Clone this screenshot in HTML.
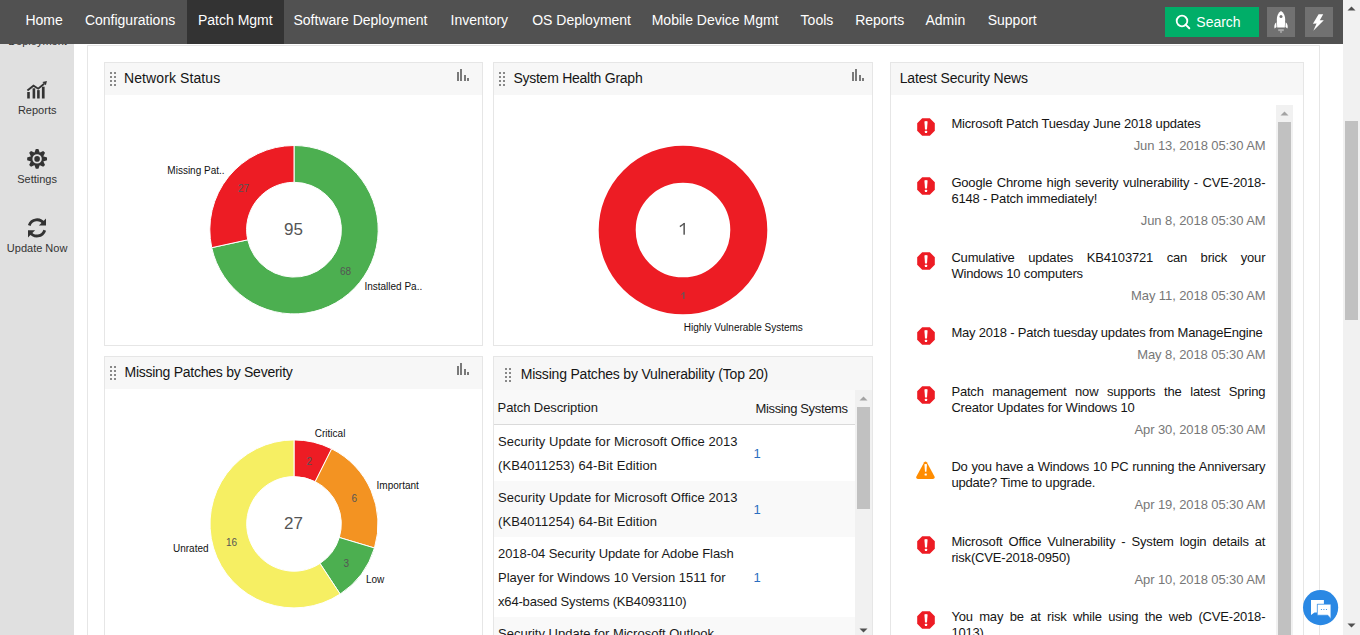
<!DOCTYPE html>
<html><head><meta charset="utf-8"><style>
html,body{margin:0;padding:0;}
body{width:1360px;height:635px;overflow:hidden;position:relative;background:#fff;font-family:"Liberation Sans",sans-serif;}
.t{position:absolute;white-space:nowrap;line-height:1;}
#hd{position:absolute;left:0;top:0;width:1360px;height:44px;z-index:5;}
</style></head><body>
<div id="main">
<div id="hd">
<div style="position:absolute;left:0px;top:0px;width:1343px;height:44px;background:#515151"></div>
<div style="position:absolute;left:187px;top:0px;width:97px;height:44px;background:#333"></div>
<div style="position:absolute;left:1165px;top:7px;width:94px;height:30px;background:#00ae68"></div>
<div style="position:absolute;left:1267px;top:7px;width:28px;height:30px;background:#717171"></div>
<div style="position:absolute;left:1305px;top:7px;width:28px;height:30px;background:#717171"></div>
<svg style="position:absolute;left:1170px;top:10px" width="26" height="24"><circle cx="12" cy="11" r="5.3" fill="none" stroke="#fff" stroke-width="1.8"/><line x1="15.6" y1="14.6" x2="19.3" y2="18.3" stroke="#fff" stroke-width="2" stroke-linecap="round"/></svg>
<svg style="position:absolute;left:1267px;top:7px" width="28" height="30" viewBox="1267 7 28 30"><path d="M1281 11 C1283.9 12.8 1285.3 16 1285.2 20 L1284.8 27.4 L1277.2 27.4 L1276.8 20 C1276.7 16 1278.1 12.8 1281 11Z" fill="#fff"/><circle cx="1281" cy="16.6" r="1.5" fill="#717171"/><path d="M1276.3 22.2 L1276.6 27 L1274.6 28.6 C1273.9 26.3 1274.4 23.8 1276.3 22.2Z" fill="#fff"/><path d="M1285.7 22.2 L1285.4 27 L1287.4 28.6 C1288.1 26.3 1287.6 23.8 1285.7 22.2Z" fill="#fff"/><rect x="1278.2" y="29.1" width="5.6" height="2" fill="#a9a9a9"/><rect x="1280.2" y="31" width="1.6" height="1.9" fill="#a9a9a9"/></svg>
<svg style="position:absolute;left:1305px;top:7px" width="28" height="30" viewBox="1305 7 28 30"><path d="M1318.6 14.3 L1323.2 14.2 L1319.8 20.3 L1323.8 20.2 L1313.3 30.8 L1316.6 23.6 L1312.9 23.8 Z" fill="#fff"/></svg>
<div class="t" style="left:25.40px;top:13px;font-size:14px;color:#fff;">Home</div>
<div class="t" style="left:84.90px;top:13px;font-size:14px;color:#fff;">Configurations</div>
<div class="t" style="left:197.95px;top:13px;font-size:14px;color:#fff;">Patch Mgmt</div>
<div class="t" style="left:293.50px;top:13px;font-size:14px;color:#fff;">Software Deployment</div>
<div class="t" style="left:450.50px;top:13px;font-size:14px;color:#fff;">Inventory</div>
<div class="t" style="left:532.20px;top:13px;font-size:14px;color:#fff;">OS Deployment</div>
<div class="t" style="left:651.70px;top:13px;font-size:14px;color:#fff;">Mobile Device Mgmt</div>
<div class="t" style="left:800.60px;top:13px;font-size:14px;color:#fff;">Tools</div>
<div class="t" style="left:855.20px;top:13px;font-size:14px;color:#fff;">Reports</div>
<div class="t" style="left:925.50px;top:13px;font-size:14px;color:#fff;">Admin</div>
<div class="t" style="left:987.70px;top:13px;font-size:14px;color:#fff;">Support</div>
<div class="t" style="left:1196.30px;top:15px;font-size:14px;color:#fff;">Search</div></div>
<div style="position:absolute;left:0px;top:44px;width:74px;height:591px;background:#e0e0e0"></div>
<svg style="position:absolute;left:24px;top:78px" width="26" height="24" viewBox="24 78 26 24"><rect x="27.2" y="92" width="2.6" height="6.5" fill="#333"/><rect x="32.6" y="88.3" width="2.6" height="10.2" fill="#333"/><rect x="37.1" y="90.1" width="2.6" height="8.4" fill="#333"/><rect x="41.9" y="86.7" width="2.7" height="11.8" fill="#333"/><polyline points="27.4,90.5 33.5,85.7 38.2,88.7 44.2,83.8" fill="none" stroke="#333" stroke-width="1.9"/><path d="M46.9 81 L42.4 81.9 L45.9 85.3 Z" fill="#333"/></svg>
<svg style="position:absolute;left:22px;top:144px" width="30" height="30" viewBox="22 144 30 30"><polygon points="34.41,152.87 35.80,148.98 38.40,148.98 39.79,152.87 39.46,152.74 43.19,150.97 45.03,152.81 43.26,156.54 43.13,156.21 47.02,157.60 47.02,160.20 43.13,161.59 43.26,161.26 45.03,164.99 43.19,166.83 39.46,165.06 39.79,164.93 38.40,168.82 35.80,168.82 34.41,164.93 34.74,165.06 31.01,166.83 29.17,164.99 30.94,161.26 31.07,161.59 27.18,160.20 27.18,157.60 31.07,156.21 30.94,156.54 29.17,152.81 31.01,150.97 34.74,152.74" fill="#333"/><circle cx="37.1" cy="158.9" r="3.75" fill="none" stroke="#e0e0e0" stroke-width="1.9"/></svg>
<svg style="position:absolute;left:22px;top:213px" width="30" height="30" viewBox="22 213 30 30"><path d="M29.25 225.53 A8.1 8.1 0 0 1 43.87 223.61" fill="none" stroke="#333" stroke-width="2.8"/><path d="M46 218.4 V225.6 H38.9Z" fill="#333"/><path d="M44.75 230.27 A8.1 8.1 0 0 1 30.13 232.19" fill="none" stroke="#333" stroke-width="2.8"/><path d="M28 237.6 V230.3 H35.1Z" fill="#333"/></svg>
<div style="position:absolute;left:87px;top:45px;width:1233px;height:700px;border:1px solid #e6e6e6;box-sizing:border-box;background:#fff"></div>
<div style="position:absolute;left:104px;top:62px;width:379px;height:284px;border:1px solid #e6e6e6;box-sizing:border-box;background:#fff"></div>
<div style="position:absolute;left:105px;top:63px;width:377px;height:32px;background:#f7f7f7"></div>
<div style="position:absolute;left:110px;top:72px;width:2px;height:2px;background:#888"></div>
<div style="position:absolute;left:110px;top:76px;width:2px;height:2px;background:#888"></div>
<div style="position:absolute;left:110px;top:80px;width:2px;height:2px;background:#888"></div>
<div style="position:absolute;left:110px;top:84px;width:2px;height:2px;background:#888"></div>
<div style="position:absolute;left:114px;top:72px;width:2px;height:2px;background:#888"></div>
<div style="position:absolute;left:114px;top:76px;width:2px;height:2px;background:#888"></div>
<div style="position:absolute;left:114px;top:80px;width:2px;height:2px;background:#888"></div>
<div style="position:absolute;left:114px;top:84px;width:2px;height:2px;background:#888"></div>
<div style="position:absolute;left:457px;top:72px;width:2px;height:9px;background:#7a7a7a"></div>
<div style="position:absolute;left:460.3px;top:69px;width:2px;height:12px;background:#7a7a7a"></div>
<div style="position:absolute;left:463.8px;top:75px;width:2px;height:6px;background:#7a7a7a"></div>
<div style="position:absolute;left:467px;top:78px;width:2px;height:3px;background:#7a7a7a"></div>
<div style="position:absolute;left:493px;top:62px;width:380px;height:284px;border:1px solid #e6e6e6;box-sizing:border-box;background:#fff"></div>
<div style="position:absolute;left:494px;top:63px;width:378px;height:32px;background:#f7f7f7"></div>
<div style="position:absolute;left:499px;top:72px;width:2px;height:2px;background:#888"></div>
<div style="position:absolute;left:499px;top:76px;width:2px;height:2px;background:#888"></div>
<div style="position:absolute;left:499px;top:80px;width:2px;height:2px;background:#888"></div>
<div style="position:absolute;left:499px;top:84px;width:2px;height:2px;background:#888"></div>
<div style="position:absolute;left:503px;top:72px;width:2px;height:2px;background:#888"></div>
<div style="position:absolute;left:503px;top:76px;width:2px;height:2px;background:#888"></div>
<div style="position:absolute;left:503px;top:80px;width:2px;height:2px;background:#888"></div>
<div style="position:absolute;left:503px;top:84px;width:2px;height:2px;background:#888"></div>
<div style="position:absolute;left:852px;top:72px;width:2px;height:9px;background:#7a7a7a"></div>
<div style="position:absolute;left:855.3px;top:69px;width:2px;height:12px;background:#7a7a7a"></div>
<div style="position:absolute;left:858.8px;top:75px;width:2px;height:6px;background:#7a7a7a"></div>
<div style="position:absolute;left:862px;top:78px;width:2px;height:3px;background:#7a7a7a"></div>
<div style="position:absolute;left:890px;top:62px;width:414px;height:700px;border:1px solid #e6e6e6;box-sizing:border-box;background:#fff"></div>
<div style="position:absolute;left:891px;top:63px;width:412px;height:32px;background:#f7f7f7"></div>
<div style="position:absolute;left:104px;top:356px;width:379px;height:400px;border:1px solid #e6e6e6;box-sizing:border-box;background:#fff"></div>
<div style="position:absolute;left:105px;top:357px;width:377px;height:32px;background:#f7f7f7"></div>
<div style="position:absolute;left:110px;top:366px;width:2px;height:2px;background:#888"></div>
<div style="position:absolute;left:110px;top:370px;width:2px;height:2px;background:#888"></div>
<div style="position:absolute;left:110px;top:374px;width:2px;height:2px;background:#888"></div>
<div style="position:absolute;left:110px;top:378px;width:2px;height:2px;background:#888"></div>
<div style="position:absolute;left:114px;top:366px;width:2px;height:2px;background:#888"></div>
<div style="position:absolute;left:114px;top:370px;width:2px;height:2px;background:#888"></div>
<div style="position:absolute;left:114px;top:374px;width:2px;height:2px;background:#888"></div>
<div style="position:absolute;left:114px;top:378px;width:2px;height:2px;background:#888"></div>
<div style="position:absolute;left:457px;top:366px;width:2px;height:9px;background:#7a7a7a"></div>
<div style="position:absolute;left:460.3px;top:363px;width:2px;height:12px;background:#7a7a7a"></div>
<div style="position:absolute;left:463.8px;top:369px;width:2px;height:6px;background:#7a7a7a"></div>
<div style="position:absolute;left:467px;top:372px;width:2px;height:3px;background:#7a7a7a"></div>
<div style="position:absolute;left:493px;top:356px;width:380px;height:400px;border:1px solid #e6e6e6;box-sizing:border-box;background:#fff"></div>
<div style="position:absolute;left:494px;top:357px;width:378px;height:33px;background:#f7f7f7"></div>
<div style="position:absolute;left:505px;top:368px;width:2px;height:2px;background:#888"></div>
<div style="position:absolute;left:505px;top:372px;width:2px;height:2px;background:#888"></div>
<div style="position:absolute;left:505px;top:376px;width:2px;height:2px;background:#888"></div>
<div style="position:absolute;left:505px;top:380px;width:2px;height:2px;background:#888"></div>
<div style="position:absolute;left:509px;top:368px;width:2px;height:2px;background:#888"></div>
<div style="position:absolute;left:509px;top:372px;width:2px;height:2px;background:#888"></div>
<div style="position:absolute;left:509px;top:376px;width:2px;height:2px;background:#888"></div>
<div style="position:absolute;left:509px;top:380px;width:2px;height:2px;background:#888"></div>
<svg style="position:absolute;left:0;top:0" width="1360" height="635">
<path d="M294.00 145.50 A84.2 84.2 0 1 1 211.74 247.66 L247.69 239.81 A47.4 47.4 0 1 0 294.00 182.30Z" fill="#4caf50" stroke="#fff" stroke-width="1"/>
<path d="M211.74 247.66 A84.2 84.2 0 0 1 294.00 145.50 L294.00 182.30 A47.4 47.4 0 0 0 247.69 239.81Z" fill="#ed1c24" stroke="#fff" stroke-width="1"/>
<circle cx="683" cy="230" r="65.8" fill="none" stroke="#ed1c24" stroke-width="37.0"/>
<path d="M294.00 439.90 A84 84 0 0 1 331.70 448.83 L315.23 481.63 A47.3 47.3 0 0 0 294.00 476.60Z" fill="#ed1c24" stroke="#fff" stroke-width="1"/>
<path d="M331.70 448.83 A84 84 0 0 1 374.47 547.99 L339.31 537.47 A47.3 47.3 0 0 0 315.23 481.63Z" fill="#f39322" stroke="#fff" stroke-width="1"/>
<path d="M374.47 547.99 A84 84 0 0 1 340.16 594.08 L319.99 563.42 A47.3 47.3 0 0 0 339.31 537.47Z" fill="#4caf50" stroke="#fff" stroke-width="1"/>
<path d="M340.16 594.08 A84 84 0 1 1 294.00 439.90 L294.00 476.60 A47.3 47.3 0 1 0 319.99 563.42Z" fill="#f6ef63" stroke="#fff" stroke-width="1"/>
</svg>
<svg style="position:absolute;left:670px;top:215px" width="30" height="90" viewBox="670 215 30 90"><rect x="683.4" y="223" width="1.5" height="11.7" fill="#555"/><path d="M679.9 226.6 L684.6 223.2" stroke="#555" stroke-width="1.3"/><rect x="683.2" y="292.3" width="1.3" height="6.6" fill="#5a5a5a"/><path d="M681.3 294.6 L684.2 292.4" stroke="#5a5a5a" stroke-width="1"/></svg>
<div style="position:absolute;left:494px;top:390px;width:361px;height:34px;background:#f9f9f9"></div>
<div style="position:absolute;left:494px;top:424px;width:361px;height:1px;background:#dadada"></div>
<div style="position:absolute;left:494px;top:481px;width:361px;height:56px;background:#f9f9f9"></div>
<div style="position:absolute;left:494px;top:617px;width:361px;height:56px;background:#f9f9f9"></div>
<div style="position:absolute;left:855px;top:390px;width:17px;height:250px;background:#f1f1f1"></div>
<div style="position:absolute;left:857px;top:406.7px;width:13px;height:102px;background:#c1c1c1"></div>
<svg style="position:absolute;left:855px;top:390px" width="17" height="250"><path d="M4.5 10.5 L12.5 10.5 L8.5 6.5Z" fill="#a3a3a3"/><path d="M4.5 238.5 L12.5 238.5 L8.5 242.5Z" fill="#505050"/></svg>
<div style="position:absolute;left:1276px;top:105px;width:17px;height:600px;background:#f1f1f1"></div>
<div style="position:absolute;left:1278px;top:122px;width:13px;height:600px;background:#c1c1c1"></div>
<svg style="position:absolute;left:1276px;top:105px" width="17" height="17"><path d="M4.5 10.5 L12.5 10.5 L8.5 6.5Z" fill="#a3a3a3"/></svg>
<svg style="position:absolute;left:917px;top:117.6px" width="18" height="18" viewBox="0 0 18 18"><path d="M5.2 0.2 H12.8 L17.8 5.2 V12.8 L12.8 17.8 H5.2 L0.2 12.8 V5.2Z" fill="#ed1c24"/><path d="M7.4 3.6 Q9 2.6 10.6 3.6 L10 11.5 H8Z" fill="#fff"/><rect x="7.9" y="12.8" width="2.2" height="2.1" rx="0.5" fill="#fff"/></svg>
<svg style="position:absolute;left:917px;top:176.6px" width="18" height="18" viewBox="0 0 18 18"><path d="M5.2 0.2 H12.8 L17.8 5.2 V12.8 L12.8 17.8 H5.2 L0.2 12.8 V5.2Z" fill="#ed1c24"/><path d="M7.4 3.6 Q9 2.6 10.6 3.6 L10 11.5 H8Z" fill="#fff"/><rect x="7.9" y="12.8" width="2.2" height="2.1" rx="0.5" fill="#fff"/></svg>
<svg style="position:absolute;left:917px;top:251.6px" width="18" height="18" viewBox="0 0 18 18"><path d="M5.2 0.2 H12.8 L17.8 5.2 V12.8 L12.8 17.8 H5.2 L0.2 12.8 V5.2Z" fill="#ed1c24"/><path d="M7.4 3.6 Q9 2.6 10.6 3.6 L10 11.5 H8Z" fill="#fff"/><rect x="7.9" y="12.8" width="2.2" height="2.1" rx="0.5" fill="#fff"/></svg>
<svg style="position:absolute;left:917px;top:326.6px" width="18" height="18" viewBox="0 0 18 18"><path d="M5.2 0.2 H12.8 L17.8 5.2 V12.8 L12.8 17.8 H5.2 L0.2 12.8 V5.2Z" fill="#ed1c24"/><path d="M7.4 3.6 Q9 2.6 10.6 3.6 L10 11.5 H8Z" fill="#fff"/><rect x="7.9" y="12.8" width="2.2" height="2.1" rx="0.5" fill="#fff"/></svg>
<svg style="position:absolute;left:917px;top:385.6px" width="18" height="18" viewBox="0 0 18 18"><path d="M5.2 0.2 H12.8 L17.8 5.2 V12.8 L12.8 17.8 H5.2 L0.2 12.8 V5.2Z" fill="#ed1c24"/><path d="M7.4 3.6 Q9 2.6 10.6 3.6 L10 11.5 H8Z" fill="#fff"/><rect x="7.9" y="12.8" width="2.2" height="2.1" rx="0.5" fill="#fff"/></svg>
<svg style="position:absolute;left:916.4px;top:460.6px" width="19" height="19" viewBox="0 0 19 19"><path d="M8.2 1.2 Q9.5 -0.3 10.8 1.2 L18.5 15.6 Q19.1 17.9 16.9 18.0 H1.9 Q-0.3 17.9 0.4 15.6Z" fill="#ff8c00"/><path d="M8.4 3.3 Q9.7 2.5 11 3.3 L10.4 10.7 H9Z" fill="#fff"/><rect x="8.6" y="12.4" width="2.2" height="2" rx="0.5" fill="#fff"/></svg>
<svg style="position:absolute;left:917px;top:535.6px" width="18" height="18" viewBox="0 0 18 18"><path d="M5.2 0.2 H12.8 L17.8 5.2 V12.8 L12.8 17.8 H5.2 L0.2 12.8 V5.2Z" fill="#ed1c24"/><path d="M7.4 3.6 Q9 2.6 10.6 3.6 L10 11.5 H8Z" fill="#fff"/><rect x="7.9" y="12.8" width="2.2" height="2.1" rx="0.5" fill="#fff"/></svg>
<svg style="position:absolute;left:917px;top:610.6px" width="18" height="18" viewBox="0 0 18 18"><path d="M5.2 0.2 H12.8 L17.8 5.2 V12.8 L12.8 17.8 H5.2 L0.2 12.8 V5.2Z" fill="#ed1c24"/><path d="M7.4 3.6 Q9 2.6 10.6 3.6 L10 11.5 H8Z" fill="#fff"/><rect x="7.9" y="12.8" width="2.2" height="2.1" rx="0.5" fill="#fff"/></svg>
<div style="position:absolute;left:1343px;top:0px;width:17px;height:635px;background:#f1f1f1"></div>
<div style="position:absolute;left:1345px;top:121px;width:13px;height:199px;background:#c1c1c1"></div>
<svg style="position:absolute;left:1343px;top:0" width="17" height="635"><path d="M4.5 10.5 L12.5 10.5 L8.5 6.5Z" fill="#505050"/><path d="M4.5 623.5 L12.5 623.5 L8.5 627.5Z" fill="#505050"/></svg>
<svg style="position:absolute;left:1302px;top:589px" width="38" height="38" viewBox="1302 589 38 38"><circle cx="1320.6" cy="607.6" r="17.6" fill="#2a88e4"/><path d="M1311 600 H1323.9 V604 H1317 V612.6 H1314.5 L1311 615Z" fill="#fff"/><path d="M1317.3 604.2 H1330.9 V618.7 L1327.8 615.2 H1317.3Z" fill="#fff" stroke="#2a88e4" stroke-width="0.6"/><circle cx="1321.4" cy="609.5" r="0.6" fill="#2a88e4"/><circle cx="1323.9" cy="609.5" r="0.6" fill="#2a88e4"/><circle cx="1326.5" cy="609.5" r="0.6" fill="#2a88e4"/></svg>
<div class="t" style="left:8.15px;top:36px;font-size:11px;color:#333;">Deployment</div>
<div class="t" style="left:17.93px;top:105px;font-size:11px;color:#333;">Reports</div>
<div class="t" style="left:17.23px;top:174px;font-size:11px;color:#333;">Settings</div>
<div class="t" style="left:6.83px;top:243px;font-size:11px;color:#333;">Update Now</div>
<div class="t" style="left:124.00px;top:71px;font-size:14px;color:#151515;letter-spacing:0.097px;">Network Status</div>
<div class="t" style="left:513.40px;top:71px;font-size:14px;color:#151515;letter-spacing:-0.252px;">System Health Graph</div>
<div class="t" style="left:899.70px;top:71px;font-size:14px;color:#151515;letter-spacing:-0.168px;">Latest Security News</div>
<div class="t" style="left:124.50px;top:365px;font-size:14px;color:#151515;letter-spacing:-0.261px;">Missing Patches by Severity</div>
<div class="t" style="left:520.70px;top:367px;font-size:14px;color:#151515;letter-spacing:-0.198px;">Missing Patches by Vulnerability (Top 20)</div>
<div class="t" style="left:167.35px;top:166px;font-size:10px;color:#111;">Missing Pat..</div>
<div class="t" style="left:364.40px;top:282px;font-size:10px;color:#111;">Installed Pa..</div>
<div class="t" style="left:238.00px;top:184px;font-size:10px;color:#555;">27</div>
<div class="t" style="left:339.90px;top:266.7px;font-size:10px;color:#555;">68</div>
<div class="t" style="left:284.10px;top:221px;font-size:17px;color:#555;">95</div>
<div class="t" style="left:683.70px;top:322.5px;font-size:10px;color:#111;">Highly Vulnerable Systems</div>
<div class="t" style="left:314.80px;top:429px;font-size:10px;color:#111;">Critical</div>
<div class="t" style="left:376.60px;top:481px;font-size:10px;color:#111;">Important</div>
<div class="t" style="left:366.00px;top:574.5px;font-size:10px;color:#111;">Low</div>
<div class="t" style="left:173.00px;top:544px;font-size:10px;color:#111;">Unrated</div>
<div class="t" style="left:306.50px;top:456.5px;font-size:10px;color:#555;">2</div>
<div class="t" style="left:351.50px;top:494px;font-size:10px;color:#555;">6</div>
<div class="t" style="left:343.50px;top:559px;font-size:10px;color:#555;">3</div>
<div class="t" style="left:226.00px;top:538px;font-size:10px;color:#555;">16</div>
<div class="t" style="left:284.00px;top:514.5px;font-size:17px;color:#555;">27</div>
<div class="t" style="left:497.60px;top:401px;font-size:13px;color:#1a1a1a;letter-spacing:-0.099px;">Patch Description</div>
<div class="t" style="left:755.50px;top:402px;font-size:13px;color:#1a1a1a;letter-spacing:-0.359px;">Missing Systems</div>
<div class="t" style="left:498.00px;top:435px;font-size:13px;color:#1a1a1a;letter-spacing:0.053px;">Security Update for Microsoft Office 2013</div>
<div class="t" style="left:498.00px;top:459px;font-size:13px;color:#1a1a1a;letter-spacing:0.097px;">(KB4011253) 64-Bit Edition</div>
<div class="t" style="left:753.40px;top:447px;font-size:13px;color:#2a6fc0;">1</div>
<div class="t" style="left:498.00px;top:491px;font-size:13px;color:#1a1a1a;letter-spacing:0.053px;">Security Update for Microsoft Office 2013</div>
<div class="t" style="left:498.00px;top:515px;font-size:13px;color:#1a1a1a;letter-spacing:0.097px;">(KB4011254) 64-Bit Edition</div>
<div class="t" style="left:753.40px;top:503px;font-size:13px;color:#2a6fc0;">1</div>
<div class="t" style="left:498.00px;top:547px;font-size:13px;color:#1a1a1a;letter-spacing:-0.073px;">2018-04 Security Update for Adobe Flash</div>
<div class="t" style="left:498.00px;top:571px;font-size:13px;color:#1a1a1a;letter-spacing:0.003px;">Player for Windows 10 Version 1511 for</div>
<div class="t" style="left:498.00px;top:595px;font-size:13px;color:#1a1a1a;letter-spacing:-0.172px;">x64-based Systems (KB4093110)</div>
<div class="t" style="left:753.40px;top:571px;font-size:13px;color:#2a6fc0;">1</div>
<div class="t" style="left:498.00px;top:627px;font-size:13px;color:#1a1a1a;">Security Update for Microsoft Outlook</div>
<div class="t" style="left:951.40px;top:117px;font-size:13px;color:#151515;letter-spacing:-0.179px;">Microsoft Patch Tuesday June 2018 updates</div>
<div class="t" style="right:94.50px;top:139px;font-size:13px;color:#777;text-align:right;letter-spacing:-0.09px">Jun 13, 2018 05:30 AM</div>
<div class="t" style="left:951.40px;top:176px;font-size:13px;color:#151515;letter-spacing:-0.18px;word-spacing:1.163px;">Google Chrome high severity vulnerability - CVE-2018-</div>
<div class="t" style="left:951.40px;top:192px;font-size:13px;color:#151515;letter-spacing:-0.18px">6148 - Patch immediately!</div>
<div class="t" style="right:94.50px;top:214px;font-size:13px;color:#777;text-align:right;letter-spacing:-0.09px">Jun 8, 2018 05:30 AM</div>
<div class="t" style="left:951.40px;top:251px;font-size:13px;color:#151515;letter-spacing:-0.18px;word-spacing:10.132px;">Cumulative updates KB4103721 can brick your</div>
<div class="t" style="left:951.40px;top:267px;font-size:13px;color:#151515;letter-spacing:-0.18px">Windows 10 computers</div>
<div class="t" style="right:94.50px;top:289px;font-size:13px;color:#777;text-align:right;letter-spacing:-0.09px">May 11, 2018 05:30 AM</div>
<div class="t" style="left:951.40px;top:326px;font-size:13px;color:#151515;letter-spacing:-0.208px;">May 2018 - Patch tuesday updates from ManageEngine</div>
<div class="t" style="right:94.50px;top:348px;font-size:13px;color:#777;text-align:right;letter-spacing:-0.09px">May 8, 2018 05:30 AM</div>
<div class="t" style="left:951.40px;top:385px;font-size:13px;color:#151515;letter-spacing:-0.18px;word-spacing:5.191px;">Patch management now supports the latest Spring</div>
<div class="t" style="left:951.40px;top:401px;font-size:13px;color:#151515;letter-spacing:-0.18px">Creator Updates for Windows 10</div>
<div class="t" style="right:94.50px;top:423px;font-size:13px;color:#777;text-align:right;letter-spacing:-0.09px">Apr 30, 2018 05:30 AM</div>
<div class="t" style="left:951.40px;top:460px;font-size:13px;color:#151515;letter-spacing:-0.18px;word-spacing:0.331px;">Do you have a Windows 10 PC running the Anniversary</div>
<div class="t" style="left:951.40px;top:476px;font-size:13px;color:#151515;letter-spacing:-0.18px">update? Time to upgrade.</div>
<div class="t" style="right:94.50px;top:498px;font-size:13px;color:#777;text-align:right;letter-spacing:-0.09px">Apr 19, 2018 05:30 AM</div>
<div class="t" style="left:951.40px;top:535px;font-size:13px;color:#151515;letter-spacing:-0.18px;word-spacing:2.625px;">Microsoft Office Vulnerability - System login details at</div>
<div class="t" style="left:951.40px;top:551px;font-size:13px;color:#151515;letter-spacing:-0.18px">risk(CVE-2018-0950)</div>
<div class="t" style="right:94.50px;top:573px;font-size:13px;color:#777;text-align:right;letter-spacing:-0.09px">Apr 10, 2018 05:30 AM</div>
<div class="t" style="left:951.40px;top:610px;font-size:13px;color:#151515;letter-spacing:-0.18px;word-spacing:2.994px;">You may be at risk while using the web (CVE-2018-</div>
<div class="t" style="left:951.40px;top:626px;font-size:13px;color:#151515;letter-spacing:-0.18px">1013)</div>
</div>
</body></html>
